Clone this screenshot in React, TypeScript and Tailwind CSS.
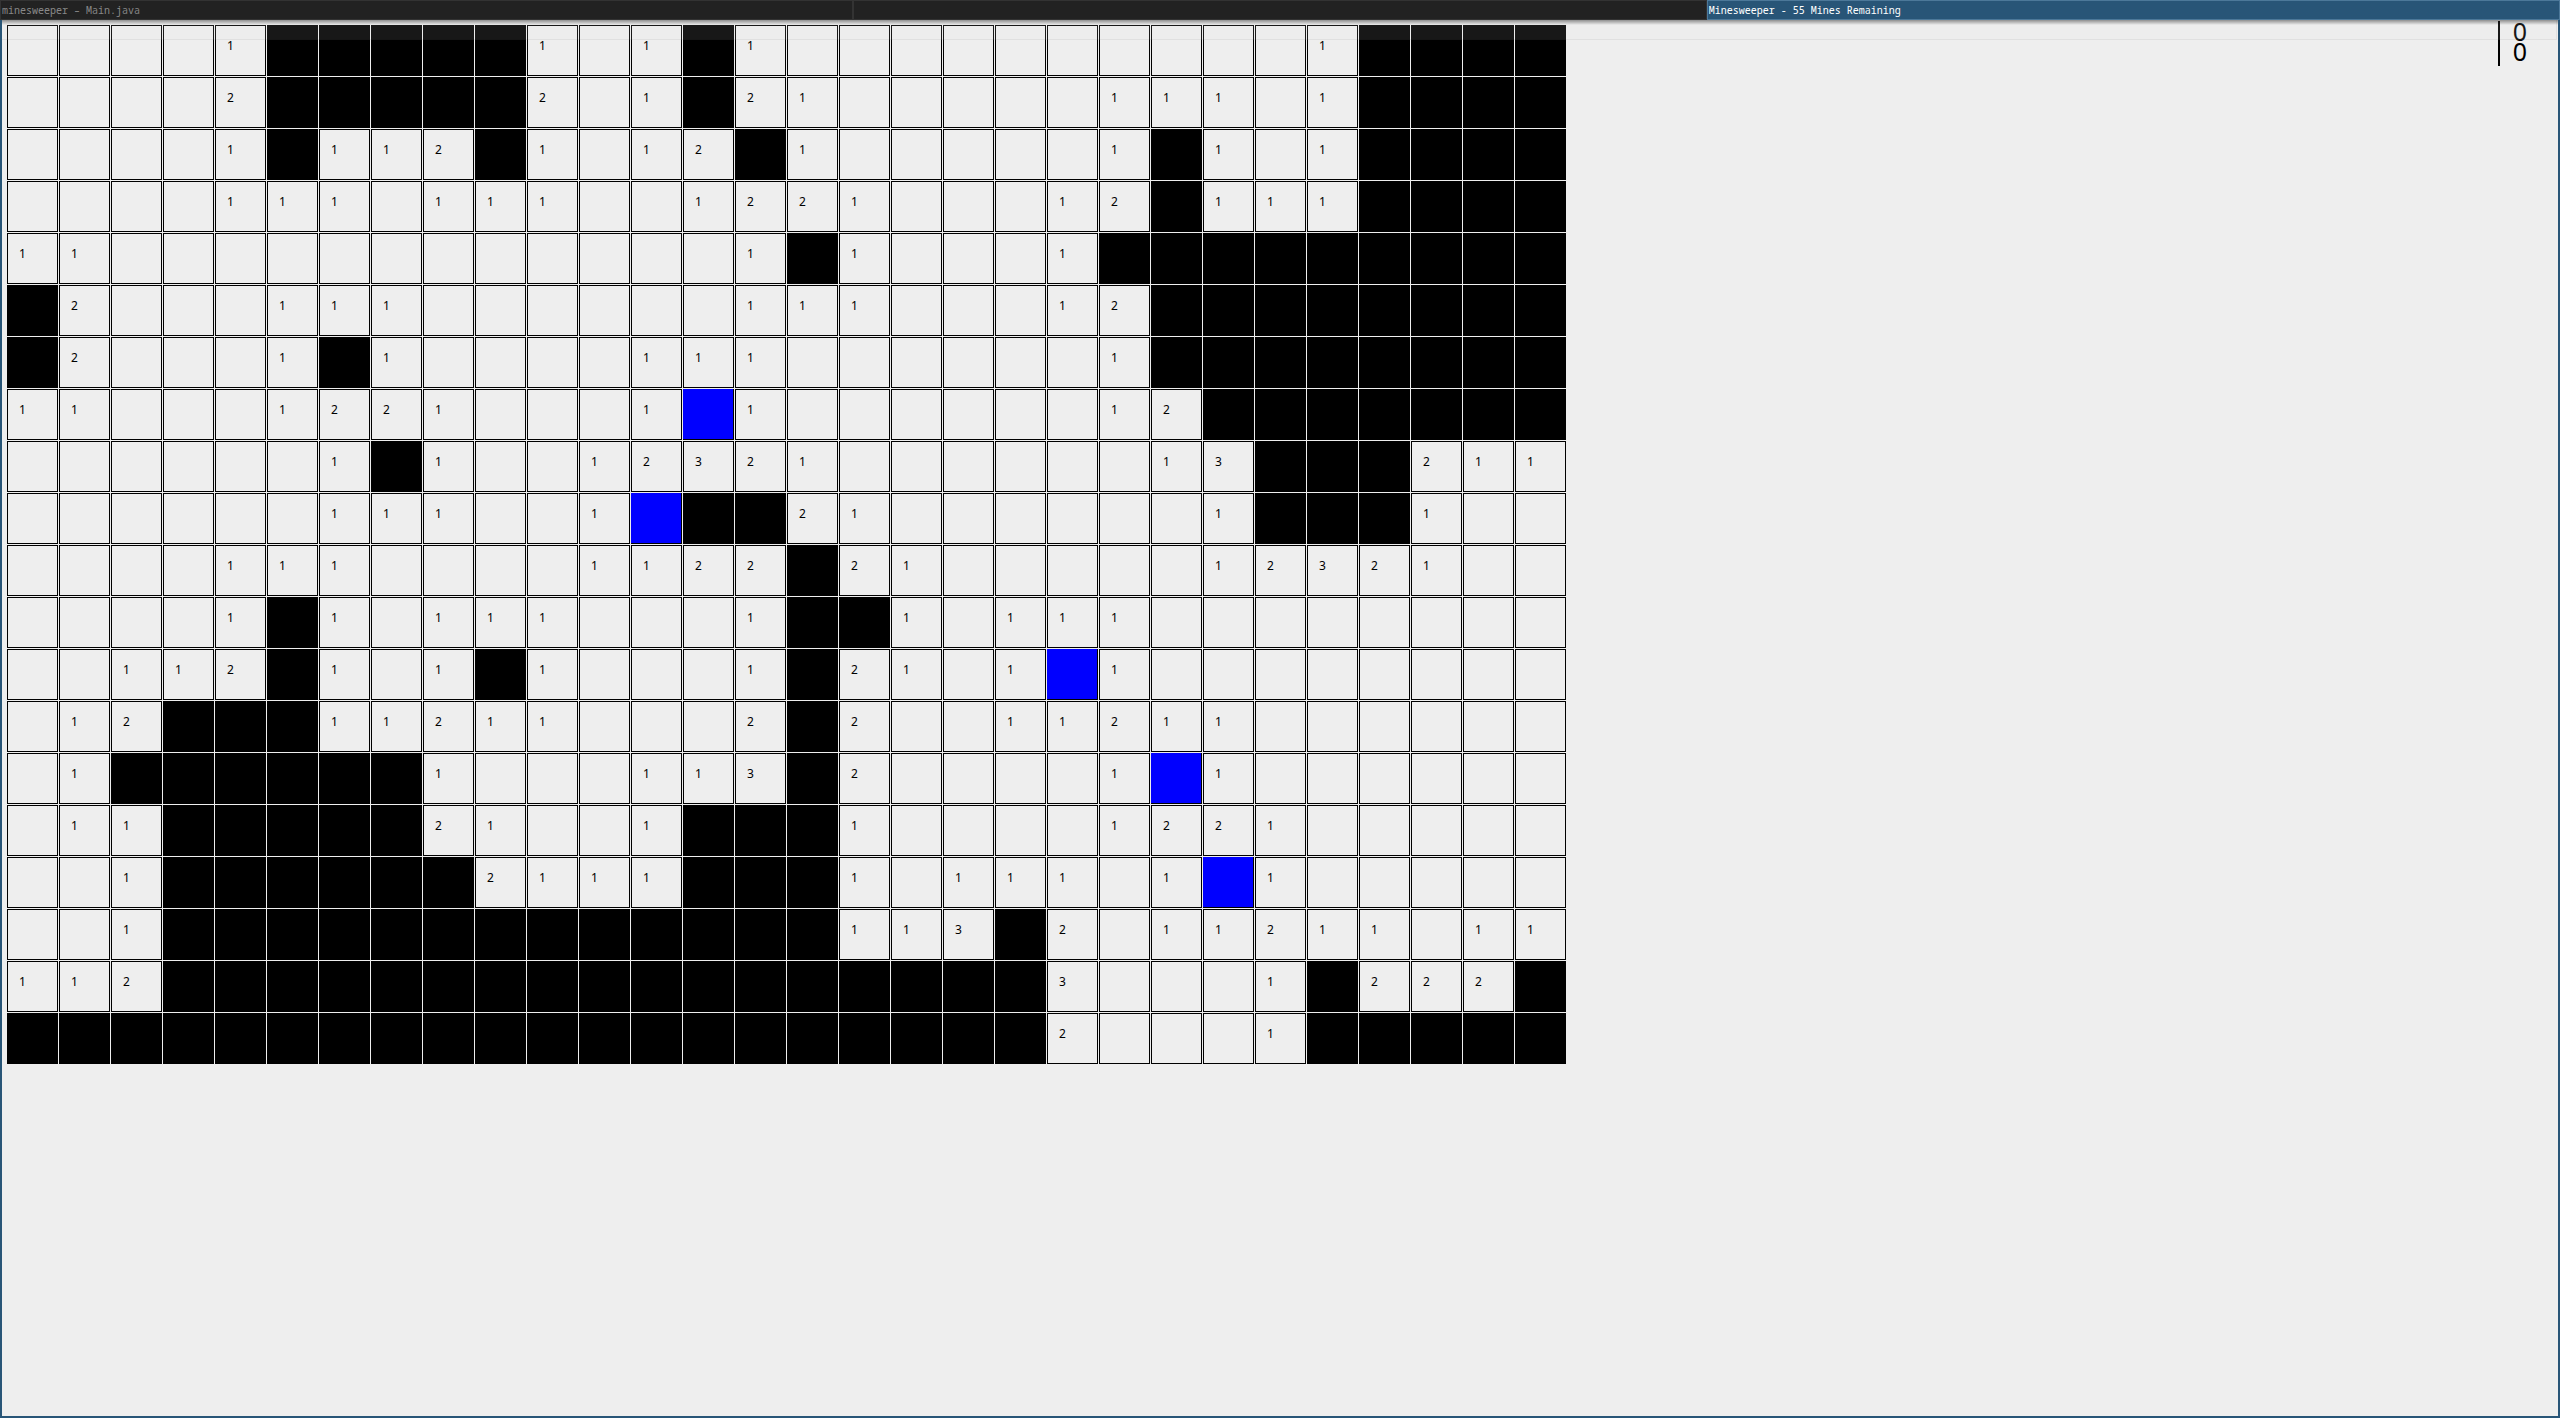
const BOARD = [
  '....1#####1.1#1..........1####',
  '....2#####2.1#21.....111.1####',
  '....1#112#1.12#1.....1#1.1####',
  '....111.111..1221...12#111####',
  '11............1#1...1#########',
  '#2...111......111...12########',
  '#2...1#1....111......1########',
  '11...1221...1B1......12#######',
  '......1#1..12321......13###211',
  '......111..1B##21......1###1..',
  '....111....1122#21.....12321..',
  '....1#1.111...1##1.111........',
  '..112#1.1#1...1#21.1B1........',
  '.12###11211...2#2..11211......',
  '.1######1...113#2....1B1......',
  '.11#####21..1###1....1221.....',
  '..1######2111###1.111.1B1.....',
  '..1#############113#2.11211.11',
  '112#################3...1#222#',
  '####################2...1#####',
];

const TABS = [
  { title: 'minesweeper – Main.java', active: false },
  { title: '', active: false },
  { title: 'Minesweeper - 55 Mines Remaining', active: true },
];

function Tab({ title, active }: { title: string; active: boolean }) {
  return (
    <button
      type="button"
      role="tab"
      aria-selected={active}
      aria-label={title || 'Untitled window'}
      className={
        'h-5 min-w-0 flex-1 truncate border px-px text-left text-[10px] leading-[18px] ' +
        (active
          ? 'border-[#4c7899] bg-[#285577] text-white'
          : 'border-[#333333] bg-[#222222] text-[#888888]')
      }
    >
      {title}
    </button>
  );
}

function Cell({ value, row, col }: { value: string; row: number; col: number }) {
  const state = value === '#' ? 'covered' : value === 'B' ? 'flagged' : value === '.' ? 'empty' : value;
  const look =
    value === '#'
      ? 'bg-black'
      : value === 'B'
        ? 'border-r border-b border-black bg-[#0000ff]'
        : 'border border-black bg-[#eeeeee]';
  return (
    <button
      type="button"
      aria-label={`Row ${row + 1}, column ${col + 1}: ${state}`}
      className={'flex size-[51px] items-start pt-3 pl-[11px] text-xs text-black ' + look}
    >
      {state === value ? value : null}
    </button>
  );
}

export default function App() {
  return (
    <div className="flex min-h-screen flex-col bg-[#eeeeee] font-['Noto_Sans','Open_Sans',sans-serif]">
      <div role="tablist" className="flex font-['Noto_Sans_Mono','DejaVu_Sans_Mono',monospace]">
        {TABS.map((tab, i) => (
          <Tab key={i} title={tab.title} active={tab.active} />
        ))}
      </div>

      <main className="relative flex flex-1 items-start justify-between border-x-2 border-b-2 border-[#285577] pl-[5px]">
        <div className="flex flex-col gap-px pt-[5px]">
          {BOARD.map((line, row) => (
            <div key={row} className="flex gap-px">
              {line.split('').map((value, col) => (
                <Cell key={col} value={value} row={row} col={col} />
              ))}
            </div>
          ))}
        </div>

        <div className="mt-px mr-[31px] h-[45px] border-l-2 border-black pl-[13px] text-[25px] leading-5 whitespace-pre-line text-black">
          {'0\n0'}
        </div>

        <div className="pointer-events-none absolute inset-x-0 top-0 mr-px h-5 border-r border-b border-black/5 bg-[#eeeeee]/10 bg-clip-border" />
        <div className="pointer-events-none absolute inset-x-0 top-0 h-[5px] bg-linear-to-b from-black/40 to-transparent" />
      </main>
    </div>
  );
}
